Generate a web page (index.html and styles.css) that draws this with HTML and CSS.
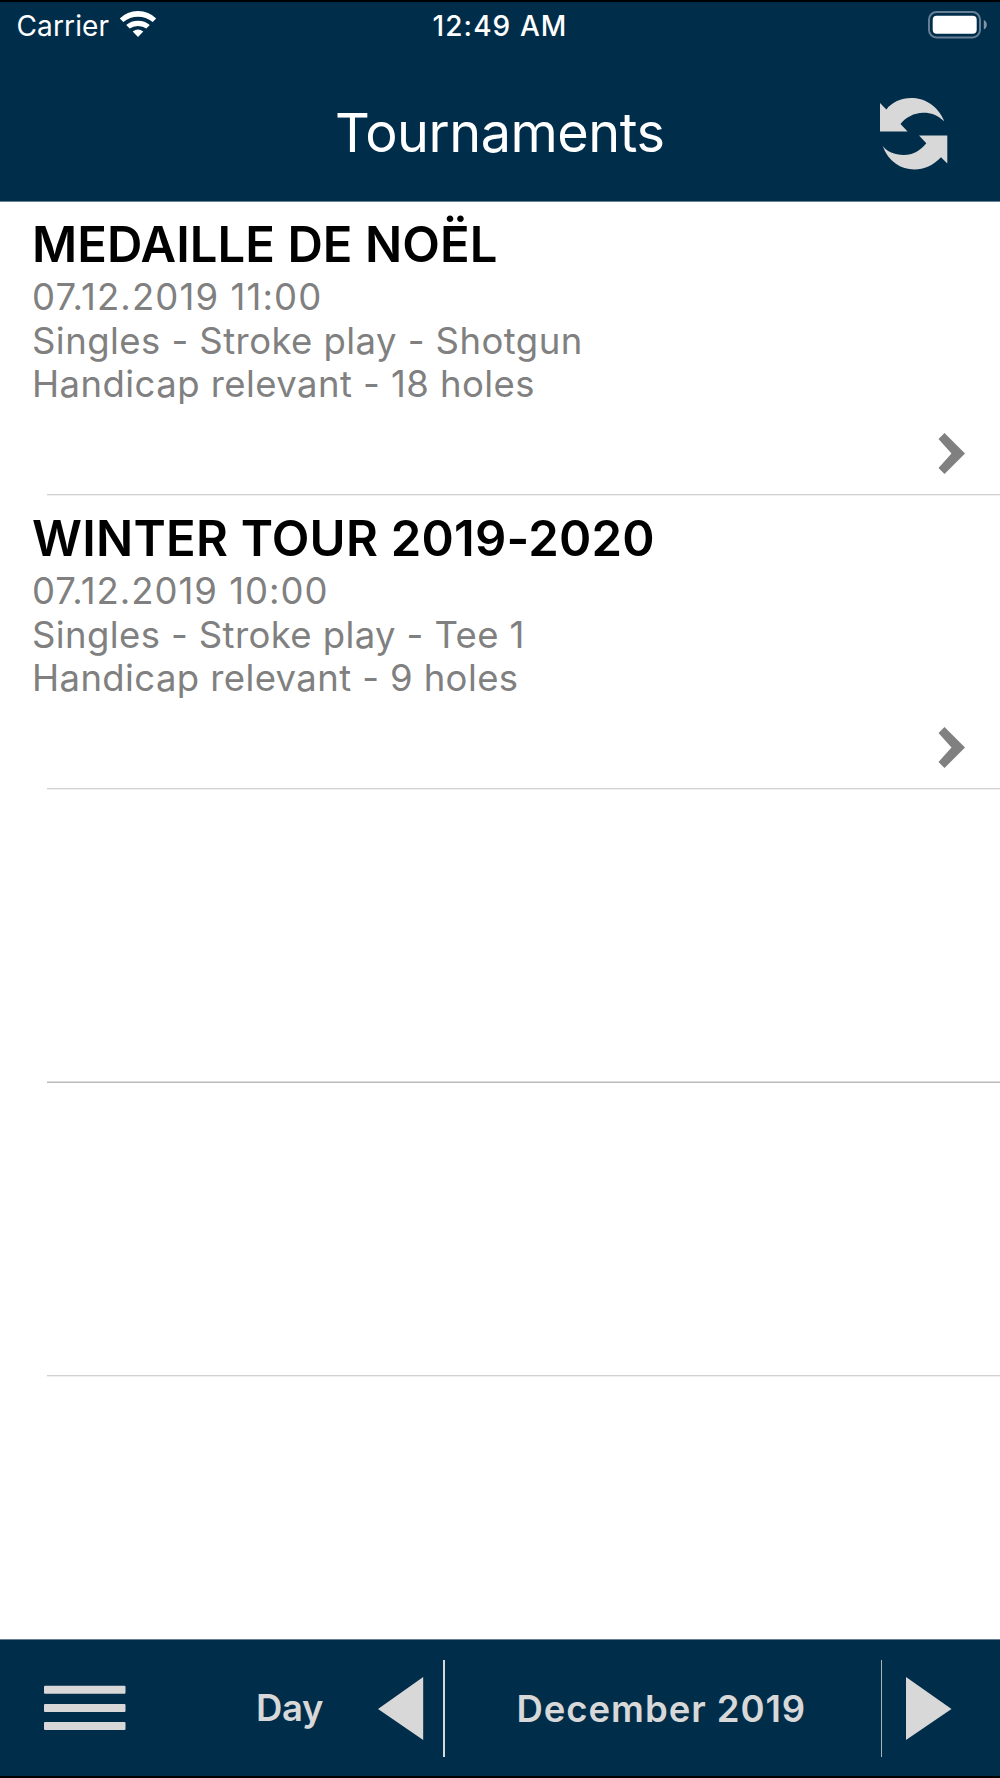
FILE: index.html
```html
<!DOCTYPE html>
<html lang="en">
<head>
<meta charset="utf-8">
<title>Tournaments</title>
<link rel="stylesheet" href="styles.css">
</head>
<body>
<div class="screen">
  <header class="header">
    <div class="status">
      <div class="status-left">
        <span class="carrier">Carrier</span>
        <svg class="wifi" width="38" height="28" viewBox="0 0 38 28">
          <path d="M0.8 8.6Q8 1 19 1T37.2 8.6L33.7 12.1Q27 6.7 19 6.7T4.3 12.1Z"/>
          <path d="M7.2 15.1Q12 10.7 19 10.7T30.8 15.1L27.3 18.6Q24 16 19 16T10.7 18.6Z"/>
          <path d="M13.7 21.6Q19 17.5 24.3 21.6L19 27Z"/>
        </svg>
      </div>
      <span class="clock">12:49 AM</span>
      <div class="status-right">
        <svg width="60" height="28" viewBox="0 0 60 28">
          <rect class="battery-shell" x="1" y="1" width="51" height="25.4" rx="7.5"/>
          <rect class="battery-level" x="4.7" y="4.7" width="44" height="18" rx="4"/>
          <path class="battery-cap" d="M55.8 9Q58.8 10.5 58.8 13.8T55.8 18.6Z"/>
        </svg>
      </div>
    </div>
    <div class="navbar">
      <h1 class="title">Tournaments</h1>
      <svg class="refresh" width="68" height="72" viewBox="0 0 68 72">
        <path d="M0 5L6.4 11.4C18 -4.5 52 -6.5 64.3 23.3C57 16.5 50 14.5 43 14.7C34 15 26 19 20.5 26L27.6 33.6H0Z"/>
        <path d="M67.3 37.5H39L46.3 45.3C40 53 33 57 24 57C14 56.5 7 53.5 2.7 48C12 74.5 43 79 61 59.3L67.3 65.5Z"/>
      </svg>
    </div>
  </header>

  <main class="list">
    <article class="row">
      <h2 class="name name-medal">MEDAILLE DE NOËL</h2>
      <p class="date">07.12.2019 11:00</p>
      <p class="meta">Singles - Stroke play - Shotgun</p>
      <p class="meta">Handicap relevant - 18 holes</p>
      <svg class="chevron" width="28" height="43" viewBox="0 0 28 43"><path d="M6.5 1L27 21.5L6.5 42L0.5 36L13.5 21.5L0.5 7Z"/></svg>
    </article>
    <article class="row">
      <h2 class="name">WINTER TOUR 2019-2020</h2>
      <p class="date date-late">07.12.2019 10:00</p>
      <p class="meta meta-tight">Singles - Stroke play - Tee 1</p>
      <p class="meta meta-tight">Handicap relevant - 9 holes</p>
      <svg class="chevron" width="28" height="43" viewBox="0 0 28 43"><path d="M6.5 1L27 21.5L6.5 42L0.5 36L13.5 21.5L0.5 7Z"/></svg>
    </article>
    <div class="row row-strong"></div>
    <div class="row"></div>
  </main>

  <footer class="toolbar">
    <svg class="menu" width="82" height="46" viewBox="0 0 82 46">
      <rect y="0.8" width="81.5" height="8" rx="1"/>
      <rect y="19" width="81.5" height="8" rx="1"/>
      <rect y="37" width="81.5" height="8" rx="1"/>
    </svg>
    <span class="day">Day</span>
    <svg class="prev" width="46" height="64" viewBox="0 0 46 64"><path d="M45.200 1V64L0 33Z"/></svg>
    <div class="month">December 2019</div>
    <svg class="next" width="46" height="64" viewBox="0 0 46 64"><path d="M0 1V64L45.5 33Z"/></svg>
  </footer>
</div>
</body>
</html>
```
FILE: styles.css
```css
* { box-sizing: border-box; margin: 0; padding: 0; }

body {
  background: #fff;
  font-family: Inter, "Liberation Sans", sans-serif;
}

svg { display: block; flex: none; }

.screen {
  width: 1000px;
  height: 1778px;
  display: flex;
  flex-direction: column;
  border-top: 2px solid #000;
  border-bottom: 2px solid #000;
}

.header {
  height: 200px;
  background: #002d4a;
  border-bottom: 1px solid #667f94;
  color: #fff;
}

.status {
  height: 48px;
  display: grid;
  grid-template-columns: 1fr auto 1fr;
  font-size: 28px;
  line-height: 49px;
}

.status-left { display: flex; padding-left: 16.5px; }
.carrier { letter-spacing: 0.13px; }
.wifi { margin: 7.5px 0 0 10px; fill: #fff; }
.clock { font-weight: 500; letter-spacing: 1.09px; }
.status-right { display: flex; justify-content: flex-end; padding: 8.5px 12px 0 0; }
.battery-shell { fill: none; stroke: #667f94; stroke-width: 2; }
.battery-level { fill: #fff; }
.battery-cap { fill: #8496a6; }

.navbar {
  height: 151px;
  padding: 48px 52.5px 0 120px;
  display: flex;
}

.title {
  flex: 1;
  font-size: 54px;
  font-weight: 400;
  line-height: 70px;
  letter-spacing: -0.47px;
  text-align: center;
}

.refresh { fill: #d8d8d8; }

.list { flex: 1; background: #fff; }

.row {
  height: 294px;
  padding: 13px 0 0 32px;
  display: flex;
  flex-direction: column;
  background: linear-gradient(#d1d1d1 50%, #f0f0f0 50%) 47px 100% / 100% 2px no-repeat;
}

.row-strong {
  height: 293px;
  background-image: linear-gradient(#dcdcdc 50%, #bcbcbc 50%);
}

.name {
  margin-bottom: 1px;
  font-size: 49px;
  font-weight: 600;
  line-height: 60px;
  letter-spacing: 0.23px;
}

.name-medal { letter-spacing: 0.05px; }

.date, .meta {
  color: #808080;
  font-size: 36.5px;
  line-height: 43.6px;
  letter-spacing: 0.44px;
}

.meta-tight { letter-spacing: 0.39px; }
.date { letter-spacing: 1.1px; }
.date-late { letter-spacing: 0.98px; }

.chevron { align-self: flex-end; margin: 25px 34px 0 0; fill: #808080; }

.toolbar {
  height: 137px;
  padding-left: 43.5px;
  display: flex;
  align-items: center;
  background: #002d4a;
  border-top: 1px solid #667f94;
  color: #d8d8d8;
  fill: #d8d8d8;
  font-size: 36.5px;
  font-weight: 600;
}

.day { width: 122px; margin-left: 130.5px; letter-spacing: -0.4px; }

.month {
  width: 439px;
  height: 97px;
  margin: 0 23.5px 0 19px;
  border-left: 2px solid #d8d8d8;
  border-right: 1px solid #a9b3bb;
  line-height: 98px;
  letter-spacing: 0.95px;
  padding-left: 71.5px;
}
```
